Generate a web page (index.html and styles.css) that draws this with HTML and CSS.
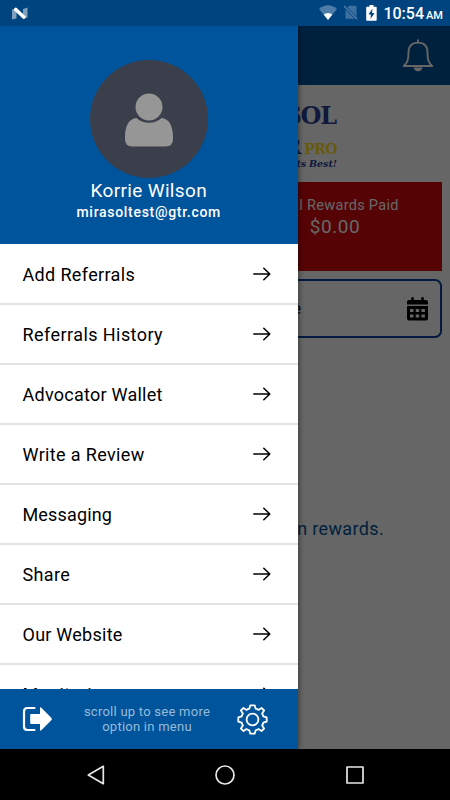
FILE: index.html
```html
<!DOCTYPE html>
<html lang="en">
<head>
<meta charset="utf-8">
<title>Menu</title>
<link rel="stylesheet" href="styles.css">
</head>
<body>
<div class="phone">
  <header class="status">
    <svg class="status-n" width="16" height="13" viewBox="0 0 16 13"><path d="M0 2.500 4.500 1v10.500l-4.500 1zM15.500.500v10l-4.500 1.500V2z" fill="#7f9fbd"/><path d="M3.800 2.500 11.700 10" stroke="#fff" stroke-width="3.600" stroke-linecap="round"/></svg>
    <div class="status-right">
      <svg class="wifi" width="18" height="15" viewBox="0 0 18 15"><path d="M0 4Q9-3.500 18 4L9 15z" fill="#4d7ca8"/><path d="M4.700 9.500Q9 6.500 13.300 9.500L9 15z" fill="#fff"/></svg>
      <svg class="sim" width="14" height="15" viewBox="0 0 14 15"><path d="M5 .8h6.500q1 0 1 1v12h-11V5z" fill="#3d709f"/><path d="m.5 1.500 13 13" stroke="#00427f" stroke-width="3"/><path d="m0 1 13 13" stroke="#5b87af" stroke-width="1.200"/></svg>
      <svg class="battery" width="11" height="16" viewBox="0 0 11 16"><path d="M3.500 0h4v1.700H10q.7 0 .7.800V15q0 .8-.8.800H1q-.8 0-.8-.8V2.500q0-.8.800-.8h2.500z" fill="#fff"/><path d="M6.500 3.500 2.500 9.500h2.400L4.500 14l4-6H6z" fill="#00427f"/></svg>
      <span class="clock">10:54</span><span class="ampm">AM</span>
    </div>
  </header>

  <main class="screen">
    <section class="page">
      <div class="appbar">
        <svg width="32" height="36" viewBox="0 0 32 36" fill="none" stroke="#fff" stroke-width="1.900" stroke-linecap="round" stroke-linejoin="round"><path d="M16 2.200v2.300M1.800 28c4-3.500 4.700-6.500 4.700-13.500C6.500 8 10 4.600 16 4.600s9.500 3.400 9.500 9.900c0 7 .7 10 4.700 13.500z"/><path d="M11.500 29.500a4.600 4.600 0 0 0 9 0z" fill="#fff" stroke="none"/></svg>
      </div>
      <div class="brand">
        <div class="brand-top">MIRASOL</div>
        <div class="brand-mid"><b>ROOFER</b> <span>PRO</span></div>
        <div class="brand-tag">Where it Meets Its Best!</div>
      </div>
      <div class="rewards"><span class="rewards-label">Total Rewards Paid</span><span class="rewards-sum">$0.00</span></div>
      <div class="date"><span>Date</span>
        <svg width="21" height="24" viewBox="0 0 21 24"><path d="M0 7.500V5q0-2 2-2h2.200V1q0-1 1.300-1t1.300 1v2h7.400V1q0-1 1.300-1t1.300 1v2H19q2 0 2 2v2.500zM0 9h21v12.500q0 2-2 2H2q-2 0-2-2z"/><path d="M3 12h3.500v3H3zm5.700 0h3.500v3H8.700zm5.700 0h3.500v3h-3.500zM3 17.500h3.500v3H3zm5.700 0h3.500v3H8.700zm5.700 0h3.500v3h-3.500z" fill="#fff"/></svg>
      </div>
      <p class="empty">Refer to earn rewards.</p>
    </section>
    <div class="scrim"></div>

    <aside class="drawer">
      <div class="profile">
        <div class="avatar"><svg width="50" height="54" viewBox="0 0 50 54" fill="#969696"><circle cx="25" cy="14" r="13.500"/><path d="M12.500 25c3 3 7.500 4.800 12.500 4.800S34.500 28 37.500 25C45 25.500 49 33 49 44v2q0 7.500-7.500 7.500h-33Q1 53.500 1 46v-2C1 33 5 25.500 12.500 25z"/></svg></div>
        <div class="name">Korrie Wilson</div>
        <div class="email">mirasoltest@gtr.com</div>
      </div>
      <nav class="menu">
        <a class="item"><span>Add Referrals</span><svg class="arrow" viewBox="0 0 18 14"><path d="M.8 7h16M10.800 1.300 16.800 7l-6 5.700"/></svg></a>
        <a class="item history"><span>Referrals History</span><svg class="arrow" viewBox="0 0 18 14"><path d="M.8 7h16M10.800 1.300 16.800 7l-6 5.700"/></svg></a>
        <a class="item wallet"><span>Advocator Wallet</span><svg class="arrow" viewBox="0 0 18 14"><path d="M.8 7h16M10.800 1.300 16.800 7l-6 5.700"/></svg></a>
        <a class="item"><span>Write a Review</span><svg class="arrow" viewBox="0 0 18 14"><path d="M.8 7h16M10.800 1.300 16.800 7l-6 5.700"/></svg></a>
        <a class="item messaging"><span>Messaging</span><svg class="arrow" viewBox="0 0 18 14"><path d="M.8 7h16M10.800 1.300 16.800 7l-6 5.700"/></svg></a>
        <a class="item"><span>Share</span><svg class="arrow" viewBox="0 0 18 14"><path d="M.8 7h16M10.800 1.300 16.800 7l-6 5.700"/></svg></a>
        <a class="item wallet"><span>Our Website</span><svg class="arrow" viewBox="0 0 18 14"><path d="M.8 7h16M10.800 1.300 16.800 7l-6 5.700"/></svg></a>
        <a class="item"><span>Monitoring</span><svg class="arrow" viewBox="0 0 18 14"><path d="M.8 7h16M10.800 1.300 16.800 7l-6 5.700"/></svg></a>
      </nav>
      <footer class="foot">
        <svg width="31" height="26" viewBox="0 0 31 26"><path d="M12.500 2H5.500Q2 2 2 5.500v15Q2 24 5.500 24h7" fill="none" stroke="#fff" stroke-width="2.200" stroke-linecap="round"/><path d="M9 8h9V2.500q0-2 1.600-.6L29.500 12q.9 1 0 2L19.600 24.100Q18 25.500 18 23.500V18H9q-.8 0-.8-.8V8.800Q8.200 8 9 8z" fill="#fff"/></svg>
        <p class="hint">scroll up to see more<br>option in menu</p>
        <svg class="gear" width="31" height="31" viewBox="-15.500 -15.500 31 31" fill="none" stroke="#fff" stroke-width="1.800" stroke-linejoin="round"><circle r="5.900"/><path d="M-2.200-14.200H2.200L3.200-10.800Q4.800-10.400 6-9.600L9-11.600 11.600-9 9.600-6Q10.400-4.800 10.800-3.200L14.200-2.200V2.200L10.800 3.200Q10.400 4.800 9.600 6L11.600 9 9 11.600 6 9.600Q4.800 10.400 3.200 10.800L2.200 14.200H-2.200L-3.200 10.800Q-4.800 10.400-6 9.600L-9 11.600-11.600 9-9.600 6Q-10.400 4.800-10.800 3.200L-14.200 2.200V-2.200L-10.800-3.200Q-10.400-4.800-9.600-6L-11.600-9-9-11.600-6-9.600Q-4.800-10.400-3.200-10.800z"/></svg>
      </footer>
    </aside>
  </main>

  <div class="navbar">
    <svg width="20" height="22" viewBox="0 0 20 22"><path d="M17.300 2.300v17.400L2.300 11z"/></svg>
    <svg width="22" height="22" viewBox="0 0 22 22"><circle cx="11" cy="11" r="9"/></svg>
    <svg width="20" height="20" viewBox="0 0 20 20"><path d="M2 2h16v16H2z"/></svg>
  </div>
</div>
</body>
</html>
```
FILE: styles.css
```css
* { box-sizing: border-box; }
body { margin: 0; font-family: Roboto, "Liberation Sans", sans-serif; color: #000; }
svg { display: block; flex: none; }
p { margin: 0; }
.phone { width: 450px; height: 800px; display: flex; flex-direction: column; overflow: hidden; background: #000; }

.status { height: 26px; flex: none; display: flex; justify-content: space-between; padding: 0 8px 0 12px; background: #00447f; color: #fff; }
.status-n { margin-top: 7px; }
.status-right { display: flex; }
.wifi { margin: 5px 7px 0 0; }
.sim { margin: 5px 8px 0 0; }
.battery { margin: 5px 6px 0 0; }
.clock { font-size: 16px; font-weight: 500; line-height: 28px; margin-right: 2px; }
.ampm { font-size: 11px; font-weight: 500; line-height: 31px; width: 16px; }

.screen { position: relative; height: 723px; flex: none; overflow: hidden; background: #fff; }
.appbar { height: 59px; display: flex; justify-content: flex-end; padding: 12px 16px 0 0; background: #00549c; }
.brand { height: 97px; padding: 15px 113px 0 0; text-align: right; font-family: "DejaVu Serif", serif; font-weight: 700; color: #2b3f96; white-space: nowrap; }
.brand-top { font-size: 24px; line-height: 31px; letter-spacing: -1.2px; margin-right: 1px; }
.brand-mid { font-size: 22px; line-height: 30px; }
.brand-mid span { color: #ffe21f; font-size: 14px; margin-left: -5px; letter-spacing: -.5px; }
.brand-tag { font-size: 9.5px; line-height: 10px; margin-top: -5px; font-style: italic; word-spacing: -.5px; letter-spacing: 0; }
.rewards { width: 220px; height: 89px; margin-left: auto; margin-right: 8px; padding-top: 14px; display: flex; flex-direction: column; align-items: center; background: #d7080e; color: #fff; }
.rewards-label { font-size: 14.5px; line-height: 20px; letter-spacing: .3px; margin-left: 4px; }
.rewards-sum { font-size: 19px; line-height: 22px; letter-spacing: .6px; margin-left: 6px; }
.date { width: 434px; height: 59px; margin: 8px 8px 0; padding: 0 12px 0 258px; display: flex; justify-content: space-between; align-items: center; border: 2px solid #0b459d; border-radius: 7px; font-size: 16px; }
.empty { margin-top: 180px; padding-right: 66px; text-align: right; font-size: 18px; line-height: 22px; letter-spacing: .35px; color: #00549c; }
.scrim { position: absolute; inset: 0; background: rgba(0, 0, 0, .6); }

.drawer { position: absolute; top: 0; left: 0; width: 297.5px; height: 723px; display: flex; flex-direction: column; background: #fff; box-shadow: 0 0 6px rgba(0, 0, 0, .6); }
.profile { height: 218px; flex: none; display: flex; flex-direction: column; align-items: center; padding-top: 34px; background: #00549c; color: #fff; }
.avatar { width: 118px; height: 118px; border-radius: 50%; background: #3a3f4b; display: flex; justify-content: center; padding-top: 33px; }
.name { font-size: 19px; line-height: 25px; letter-spacing: .35px; }
.email { font-size: 14px; line-height: 18px; font-weight: 500; letter-spacing: .7px; }
.menu { flex: 1; min-height: 0; overflow: hidden; padding-top: 1px; }
.item { height: 60px; display: flex; justify-content: space-between; align-items: center; padding: 1px 26.5px 0 22.5px; border-bottom: 2px solid #e4e4e4; font-size: 18px; letter-spacing: .35px; }
.history { letter-spacing: .43px; }
.wallet { letter-spacing: .25px; }
.messaging { letter-spacing: .15px; }
.arrow { width: 18px; height: 14px; margin-top: -2px; fill: none; stroke: #000; stroke-width: 1.5; stroke-linecap: round; stroke-linejoin: round; }
.foot { height: 60px; flex: none; display: flex; justify-content: space-between; align-items: center; padding: 0 29.5px 0 22px; background: #00549c; }
.hint { padding-left: 4px; text-align: center; font-size: 13px; line-height: 15.5px; letter-spacing: .25px; color: #99bbd7; }

.navbar { height: 51px; display: flex; justify-content: space-between; align-items: center; padding: 1px 85.5px 0 85.5px; }
.navbar svg { fill: none; stroke: #e6e6e6; stroke-width: 1.7; stroke-linejoin: round; }
```
